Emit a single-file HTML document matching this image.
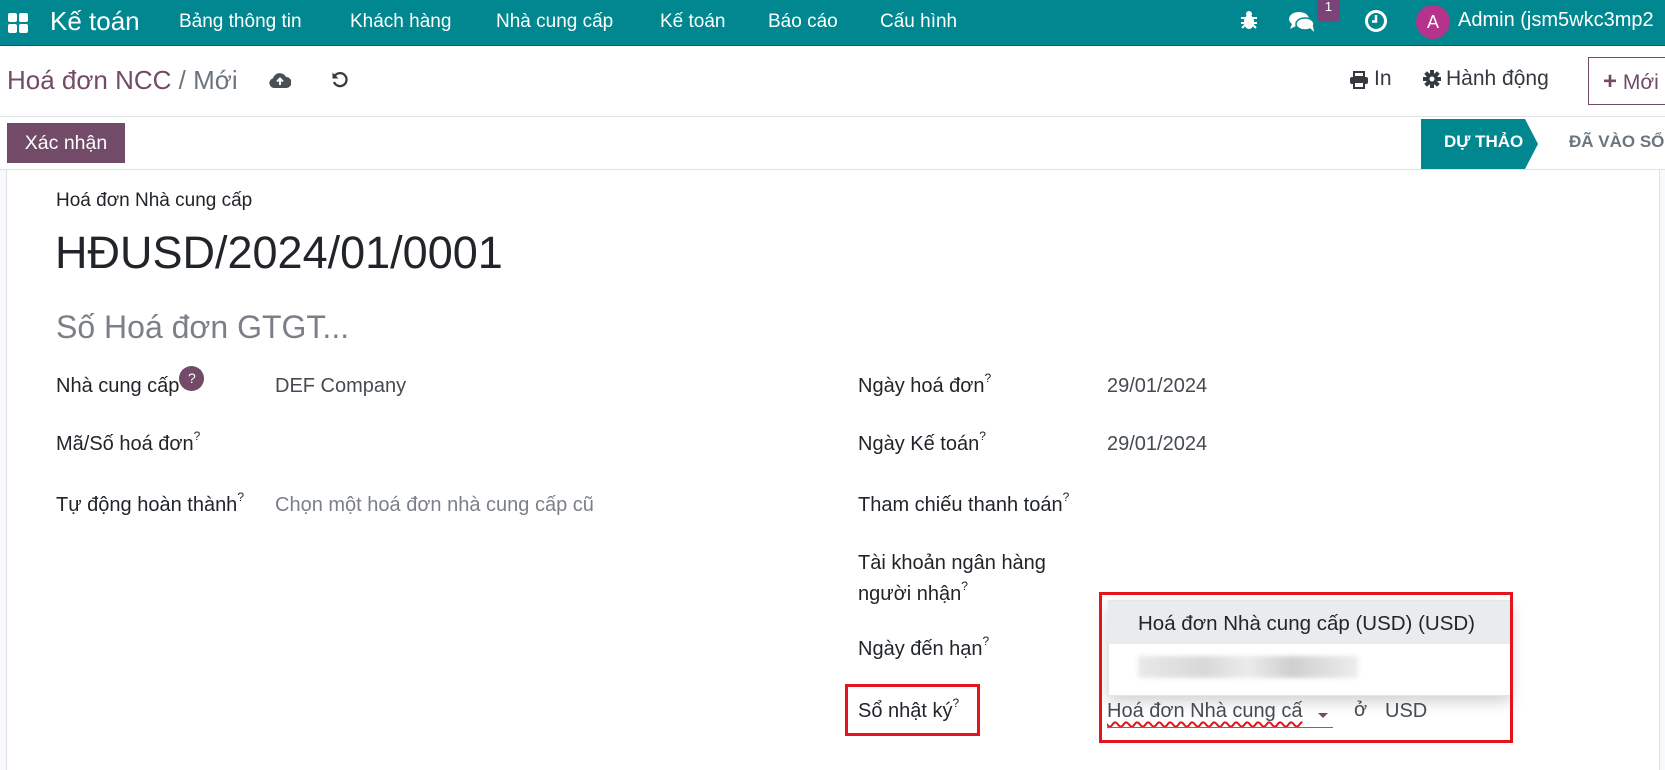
<!DOCTYPE html>
<html><head><meta charset="utf-8"><style>
*{box-sizing:border-box;margin:0;padding:0}
body{width:1665px;height:770px;overflow:hidden;background:#fff;font-family:"Liberation Sans",sans-serif;color:#212529;position:relative}
.a{position:absolute;white-space:nowrap}
.nav{position:absolute;left:0;top:0;width:1665px;height:46px;background:#00878f;border-bottom:1px solid #0a5a5f}
.nav .a{color:#fff;font-size:19px;top:11px}
.lbl{font-size:20px;color:#212529}
.val{font-size:20px;color:#444b52}
sup{font-size:12px;vertical-align:top;position:relative;top:-4px}
</style></head><body>
<div class="nav">
 <svg class="a" style="left:8px;top:13px" width="20" height="20" viewBox="0 0 20 20" fill="#fff"><rect x="0" y="0" width="9" height="9" rx="2"/><rect x="11" y="0" width="9" height="9" rx="2"/><rect x="0" y="11" width="9" height="9" rx="2"/><rect x="11" y="11" width="9" height="9" rx="2"/></svg>
 <div class="a" style="left:50px;top:6px;font-size:26px">Kế toán</div>
 <div class="a" style="left:179px">Bảng thông tin</div>
 <div class="a" style="left:350px">Khách hàng</div>
 <div class="a" style="left:496px">Nhà cung cấp</div>
 <div class="a" style="left:660px">Kế toán</div>
 <div class="a" style="left:768px">Báo cáo</div>
 <div class="a" style="left:880px">Cấu hình</div>
 <svg class="a" style="left:1240px;top:10px" width="18" height="20" viewBox="0 0 18 20" fill="#fff"><ellipse cx="9" cy="12" rx="5" ry="7"/><circle cx="9" cy="4" r="3"/><path d="M1 8h4M13 8h4M1 13h4M13 13h4M2 18l3-3M16 18l-3-3" stroke="#fff" stroke-width="2"/></svg>
 <svg class="a" style="left:1288px;top:10px" width="28" height="24" viewBox="0 0 28 24" fill="#fff"><ellipse cx="11" cy="9" rx="10" ry="7"/><path d="M4 14l-2 5 6-3z"/><ellipse cx="17" cy="14" rx="9" ry="6" fill="#fff" stroke="#00878f" stroke-width="1.5"/><path d="M22 18l4 4-1-6z"/></svg>
 <div class="a" style="left:1317px;top:0;width:23px;height:21px;background:#7c4379;border-radius:0 0 3px 3px;font-size:13px;text-align:center;line-height:14px">1</div>
 <svg class="a" style="left:1364px;top:9px" width="24" height="24" viewBox="0 0 24 24"><circle cx="12" cy="12" r="9.5" fill="none" stroke="#fff" stroke-width="3"/><path d="M12 6v6.5h-4" stroke="#fff" stroke-width="2.5" fill="none"/></svg>
 <div class="a" style="left:1416px;top:5px;width:34px;height:34px;border-radius:50%;background:#b5338a;color:#fff;font-size:18px;text-align:center;line-height:34px">A</div>
 <div class="a" style="left:1458px;top:9px;font-size:20px">Admin (jsm5wkc3mp2</div>
</div>
<div class="a" style="left:7px;top:65px;font-size:26px;color:#714b67">Hoá đơn NCC <span style="color:#6c757d">/ Mới</span></div>
<svg class="a" style="left:269px;top:72px" width="22" height="16" viewBox="0 0 22 16"><path d="M5 16a5 5 0 0 1-1-9.8A7 7 0 0 1 17 5a5.5 5.5 0 0 1 0 11z" fill="#495057"/><path d="M11 13V7M8 9.5l3-3 3 3" stroke="#fff" stroke-width="2" fill="none"/></svg>
<svg class="a" style="left:331px;top:71px" width="18" height="18" viewBox="0 0 18 18"><path d="M4 4.5A6.5 6.5 0 1 1 3 11" fill="none" stroke="#343a40" stroke-width="2.3"/><path d="M1.5 1.5v6h6z" fill="#343a40"/></svg>
<svg class="a" style="left:1349px;top:71px" width="20" height="18" viewBox="0 0 20 18"><rect x="5" y="1" width="10" height="5" fill="none" stroke="#343a40" stroke-width="2"/><rect x="1" y="6" width="18" height="7" rx="2" fill="#343a40"/><rect x="5" y="11" width="10" height="6" fill="#fff" stroke="#343a40" stroke-width="2"/></svg>
<div class="a" style="left:1374px;top:67px;font-size:21px;color:#343a40">In</div>
<svg class="a" style="left:1423px;top:70px" width="18" height="18" viewBox="0 0 18 18"><g fill="#343a40"><circle cx="9" cy="9" r="6"/><rect x="7" y="0" width="4" height="18"/><rect x="0" y="7" width="18" height="4"/><rect x="7" y="0" width="4" height="18" transform="rotate(45 9 9)"/><rect x="7" y="0" width="4" height="18" transform="rotate(-45 9 9)"/></g><circle cx="9" cy="9" r="2.5" fill="#fff"/></svg>
<div class="a" style="left:1446px;top:67px;font-size:21px;color:#343a40">Hành động</div>
<div class="a" style="left:1588px;top:57px;width:90px;height:48px;border:1px solid #714b67;color:#714b67;font-size:21px;padding:10px 0 0 14px"><b style="font-size:24px">+</b> Mới</div>
<div class="a" style="left:0;top:116px;width:1665px;height:1px;background:#dee2e6"></div>
<div class="a" style="left:7px;top:123px;width:118px;height:40px;background:#714b67;color:#fff;font-size:19.5px;padding-top:9px;text-align:center">Xác nhận</div>
<svg class="a" style="left:1421px;top:119px" width="120" height="50"><polygon points="0,0 104,0 117,25 104,50 0,50" fill="#00878f"/></svg>
<div class="a" style="left:1444px;top:132px;font-size:17px;font-weight:bold;color:#fff">DỰ THẢO</div>
<div class="a" style="left:1569px;top:132px;font-size:17px;font-weight:bold;color:#6c757d">ĐÃ VÀO SỔ</div>
<div class="a" style="left:0;top:169px;width:1665px;height:1px;background:#dee2e6"></div>
<div class="a" style="left:0;top:170px;width:7px;height:600px;background:#f8f9fa;border-right:1px solid #dee2e6"></div>
<div class="a" style="left:1659px;top:170px;width:6px;height:600px;background:#f8f9fa;border-left:1px solid #dee2e6"></div>

<div class="a" style="left:56px;top:190px;font-size:19px">Hoá đơn Nhà cung cấp</div>
<div class="a" style="left:55px;top:227px;font-size:45px">HĐUSD/2024/01/0001</div>
<div class="a" style="left:56px;top:309px;font-size:32px;color:#7b8088">Số Hoá đơn GTGT...</div>

<div class="a lbl" style="left:56px;top:375px">Nhà cung cấp<span style="display:inline-block;width:25px;height:25px;border-radius:50%;background:#714b67;color:#fff;font-size:14px;text-align:center;line-height:24px;vertical-align:top;position:relative;top:-9px">?</span></div>
<div class="a val" style="left:275px;top:375px">DEF Company</div>
<div class="a lbl" style="left:56px;top:433px">Mã/Số hoá đơn<sup>?</sup></div>
<div class="a lbl" style="left:56px;top:494px">Tự động hoàn thành<sup>?</sup></div>
<div class="a val" style="left:275px;top:494px;color:#7b8088">Chọn một hoá đơn nhà cung cấp cũ</div>

<div class="a lbl" style="left:858px;top:375px">Ngày hoá đơn<sup>?</sup></div>
<div class="a val" style="left:1107px;top:375px">29/01/2024</div>
<div class="a lbl" style="left:858px;top:433px">Ngày Kế toán<sup>?</sup></div>
<div class="a val" style="left:1107px;top:433px">29/01/2024</div>
<div class="a lbl" style="left:858px;top:494px">Tham chiếu thanh toán<sup>?</sup></div>
<div class="a lbl" style="left:858px;top:552px">Tài khoản ngân hàng</div>
<div class="a lbl" style="left:858px;top:583px">người nhận<sup>?</sup></div>
<div class="a lbl" style="left:858px;top:638px">Ngày đến hạn<sup>?</sup></div>
<div class="a lbl" style="left:858px;top:700px">Sổ nhật ký<sup>?</sup></div>
<div class="a" style="left:845px;top:684px;width:135px;height:52px;border:3px solid #e3141b"></div>

<div class="a" style="left:1108px;top:600px;width:403px;height:96px;background:#fff;box-shadow:0 6px 14px rgba(0,0,0,.18);border:1px solid #e5e5e5"></div>
<div class="a" style="left:1108px;top:601px;width:403px;height:43px;background:#e9ecef"></div>
<div class="a" style="left:1138px;top:612px;font-size:20.5px">Hoá đơn Nhà cung cấp (USD) (USD)</div>
<div class="a" style="left:1138px;top:656px;width:220px;height:22px;background:linear-gradient(90deg,#e0e0e0,#c8c8c8 30%,#e4e4e4 50%,#bcbcbc 70%,#e6e6e6);opacity:.7;filter:blur(2px)"></div>
<div class="a" style="left:1107px;top:700px;font-size:20px;color:#444b52;text-decoration:underline wavy #e3141b;text-underline-offset:4px">Hoá đơn Nhà cung cấ</div>
<div class="a" style="left:1318px;top:713px;width:0;height:0;border-left:5px solid transparent;border-right:5px solid transparent;border-top:5px solid #714b67"></div>
<div class="a" style="left:1107px;top:727px;width:226px;height:1px;background:#00a09d"></div>
<div class="a" style="left:1354px;top:699px;font-size:20px;color:#444b52">ở</div>
<div class="a" style="left:1385px;top:700px;font-size:20px;color:#444b52">USD</div>
<div class="a" style="left:1099px;top:592px;width:414px;height:151px;border:3px solid #e3141b"></div>
</body></html>
